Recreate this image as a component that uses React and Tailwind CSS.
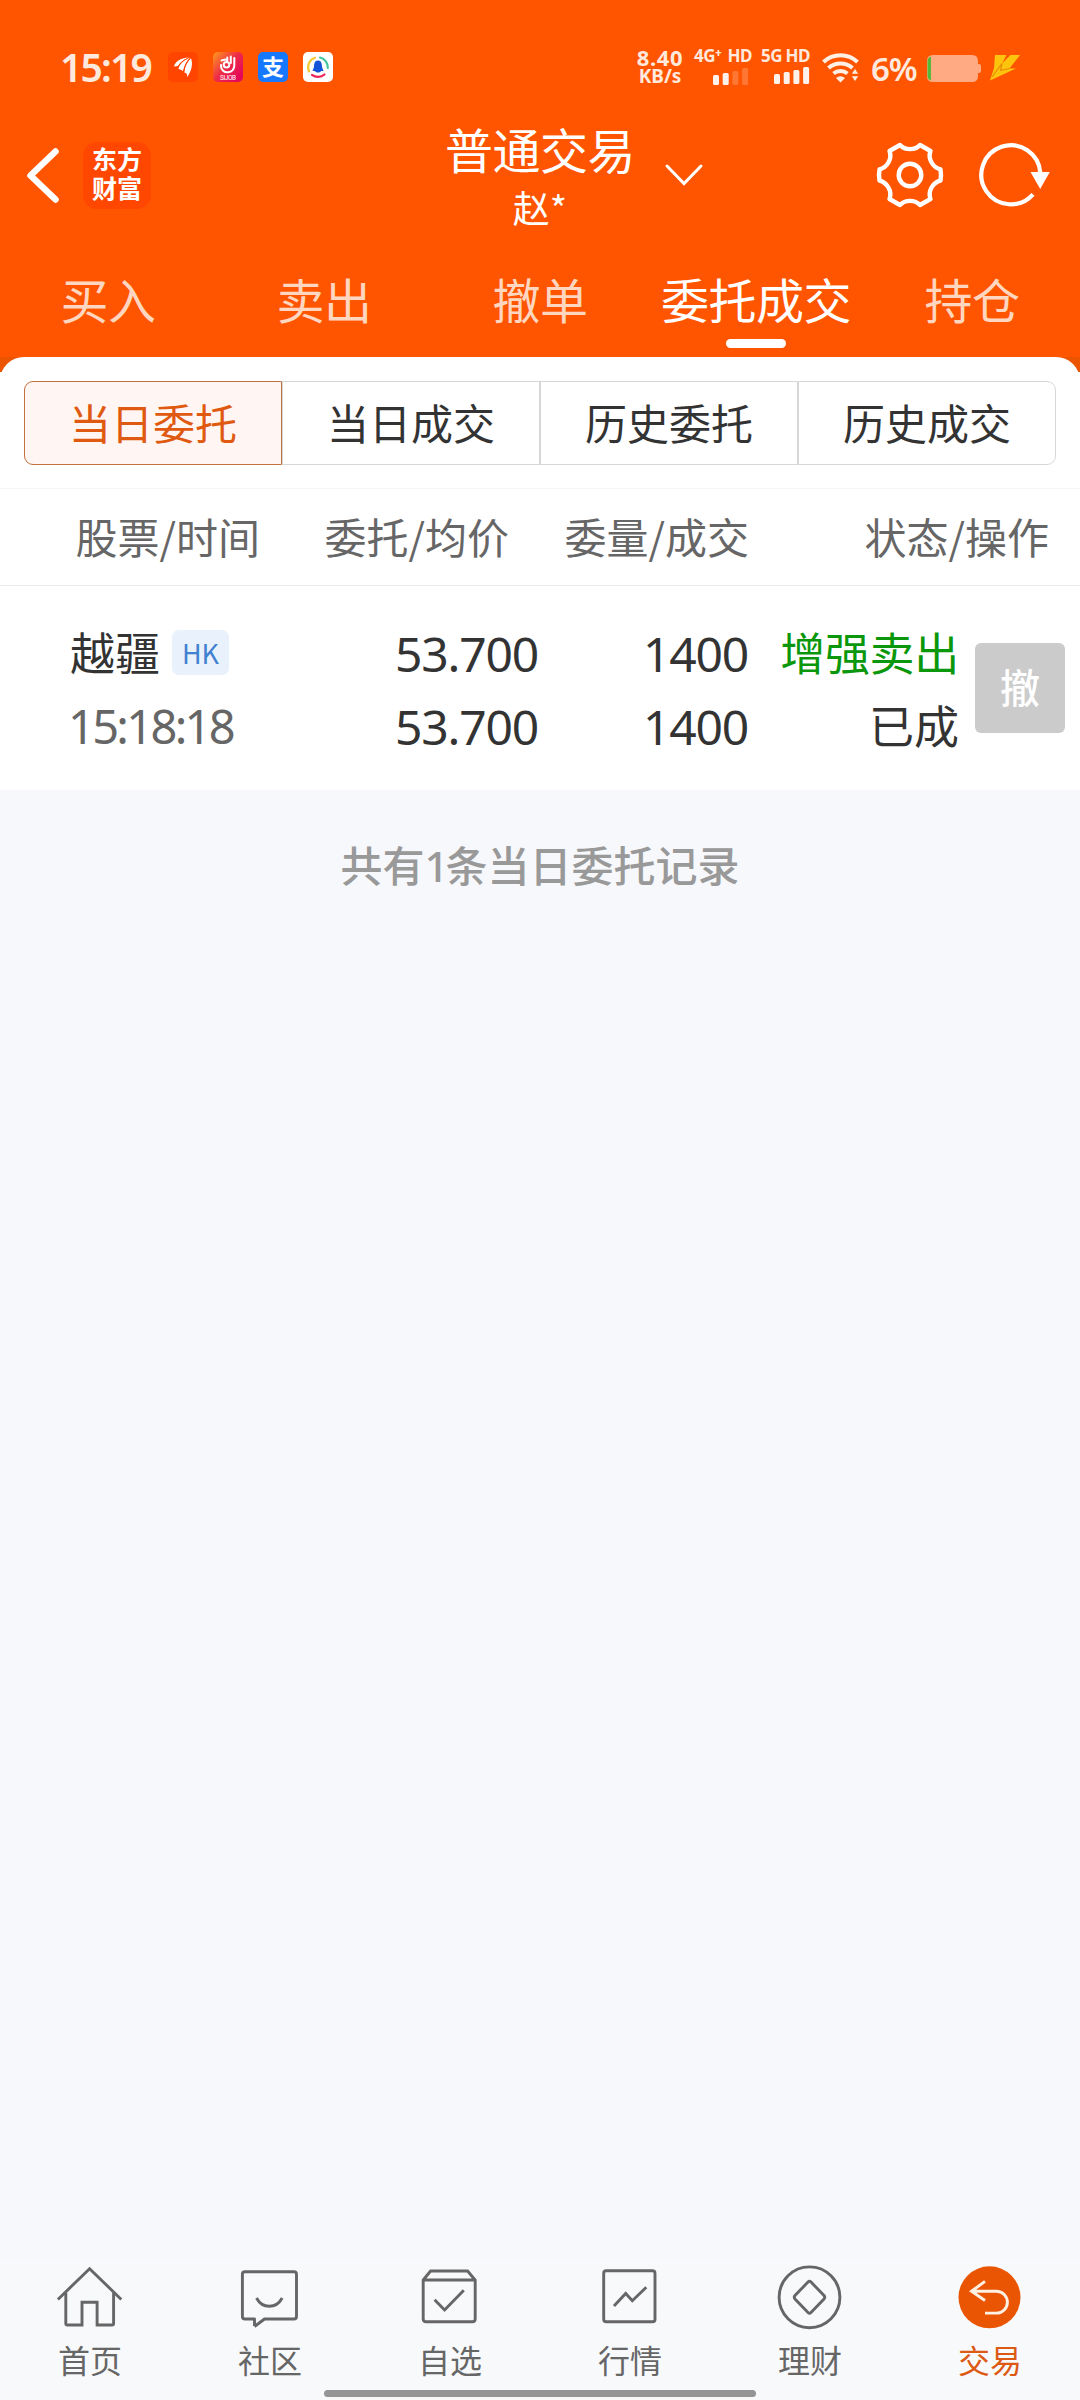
import React from 'react';

const NUM = "font-['Noto_Sans','Noto_Sans_CJK_SC',sans-serif]";

const mainTabs = ['买入', '卖出', '撤单', '委托成交', '持仓'];
const subTabs = ['当日委托', '当日成交', '历史委托', '历史成交'];

const SignalBars = ({ level }) => (
  <svg width="36" height="17" viewBox="0 0 36 17" fill="#fff">
    {[7, 5, 3, 0].map((y, i) => (
      <rect key={y} x={i * 9.7} y={y} width="6" height={17 - y} rx="1.5" opacity={i < level ? 0.92 : 0.2} />
    ))}
  </svg>
);

const NotificationIcons = () => (
  <div className="flex gap-[15px] ml-[17px]">
    <svg width="30" height="30" viewBox="0 0 30 30">
      <rect width="30" height="30" rx="5" fill="#ff4500" />
      <g fill="#fff">
        <path d="M6 14.500C7 10 12 5.800 21 5.500C16 7.500 12 10 10 14Z" />
        <path d="M10.500 17C11.500 12.500 15.500 8 22 5.800C18.500 9 16.500 13 15 19Q13 17.500 10.500 17Z" />
        <path d="M16.300 20.500C17 14 19.500 9.500 23 6.200C25 11 24 19 19 25.200C19.500 22 18.500 21 16.300 20.500Z" />
      </g>
      <path d="M9.500 16C11.500 11.500 15.500 8 20 6.200M15.600 20C16.500 14 19 9.500 21.800 7" fill="none" stroke="#ff4500" strokeWidth="0.800" />
    </svg>
    <svg width="30" height="30" viewBox="0 0 30 30">
      <defs>
        <linearGradient id="sijob" x1="0" y1="0" x2="0.9" y2="0.8">
          <stop offset="0" stopColor="#ff9a1c" />
          <stop offset="0.55" stopColor="#ee2d48" />
          <stop offset="1" stopColor="#e5075a" />
        </linearGradient>
      </defs>
      <rect width="30" height="30" rx="5" fill="url(#sijob)" />
      <g fill="none" stroke="#fff" strokeWidth="2" strokeLinecap="round">
        <path d="M8 13C7.500 17.500 11 20.500 15 20.300C19 20.200 21.500 17 21.300 13V6" />
        <path d="M17.800 11V4.500M14.300 9V5.500M8.500 8.500L12.500 7.500" />
        <circle cx="13.500" cy="12.800" r="2.800" />
      </g>
      <text x="15" y="28" textAnchor="middle" fontSize="6.500" fill="#fff" fontFamily="Roboto" textLength="16">SIJOB</text>
    </svg>
    <div className="w-[30px] h-[30px] rounded-[5px] bg-[#1677ff] text-white flex items-center justify-center text-[22px] leading-none font-bold">
      <span className="-mt-[2px]">支</span>
    </div>
    <svg width="30" height="30" viewBox="0 0 30 30">
      <rect width="30" height="30" rx="5" fill="#fff" />
      <g fill="none" strokeWidth="2.200" strokeLinecap="round">
        <path d="M6 19.500A10 10 0 0 1 12 5.800" stroke="#f3c935" />
        <path d="M17 5.500A10 10 0 0 1 24.800 16" stroke="#3fc6a0" />
        <path d="M9 22.800A10 10 0 0 0 21.500 22.500" stroke="#ec2458" />
      </g>
      <path d="M15 8.500C11.500 8.500 11 12 11 15L9.500 19H12C13 21 17 21 18 19H20.500L19 15C19 12 18.500 8.500 15 8.500Z" fill="#1354d8" />
    </svg>
  </div>
);

const StatusBar = () => (
  <div className={`h-[110px] pt-[47px] pl-[60px] flex items-start text-[#ffe9dd] ${NUM}`}>
    <div className="flex items-center h-[40px]">
      <span className="w-[91px] text-[39px] leading-[40px] font-semibold tracking-[-1.800px] whitespace-nowrap">15:19</span>
      <NotificationIcons />
    </div>

    <div className="ml-[302px] w-[50px] flex flex-col items-center font-bold leading-none">
      <span className="text-[22px] leading-[20px] tracking-[0.600px]">8.40</span>
      <span className="text-[19px] leading-[18px]">KB/s</span>
    </div>
    <div className="ml-[9px] w-[60px] flex flex-col font-bold text-[17px] leading-[17px]">
      <span className="whitespace-nowrap flex justify-between w-[58px] tracking-[-0.500px]"><span>4G<span className="font-['Roboto']">⁺</span></span><span>HD</span></span>
      <div className="ml-[19px] mt-[3px]"><SignalBars level={2} /></div>
    </div>
    <div className="ml-[7px] w-[50px] flex flex-col font-bold text-[17px] leading-[17px]">
      <span className="whitespace-nowrap flex justify-between w-[49px] tracking-[-0.500px]"><span>5G</span><span>HD</span></span>
      <div className="ml-[13px] mt-[3px]"><SignalBars level={4} /></div>
    </div>

    <svg className="ml-[11px] mt-[6px] shrink-0" width="38" height="30" viewBox="0 0 38 30">
      <g fill="none" stroke="#fff0e6" strokeWidth="4">
        <path d="M1.500 9A25 25 0 0 1 35.500 9" />
        <path d="M6.500 15A18 18 0 0 1 30.500 15" />
        <path d="M11.500 20.500A11 11 0 0 1 25.500 20.500" />
      </g>
      <path d="M14 25Q18.500 21.500 23 25L18.500 29.500Z" fill="#fff0e6" />
      <path d="M29.500 21L33 15.500L36.500 21ZM29.500 23L33 28.500L36.500 23Z" fill="#fff0e6" stroke="#ff5500" strokeWidth="0.500" />
    </svg>
    <span className="ml-[11px] w-[48px] text-[33px] leading-[40px] font-semibold tracking-[-1.200px] whitespace-nowrap pt-[2px]">6%</span>
    <svg className="ml-[8px] mt-[8px] shrink-0" width="55" height="27" viewBox="0 0 55 27">
      <path d="M6 0H45Q51 0 51 6V9H52Q54 9 54 11V16Q54 18 52 18H51V21Q51 27 45 27H6Q0 27 0 21V6Q0 0 6 0Z" fill="#ffaa82" />
      <path d="M4 1.500Q0.500 2.500 0.500 6V21Q0.500 24.500 4 25.500Z" fill="#55b93c" />
    </svg>
    <svg className="ml-[8px] mt-[8px] shrink-0" width="30" height="26" viewBox="0 0 30 26">
      <path d="M5 0H16.500L12 8.500L20.500 0H30L19.500 13.500H26L0 25.500L4 13Z" fill="#fdc40e" />
      <path d="M2 22L12 8.500L10.500 15.500L19.500 13.500" fill="none" stroke="#e98a05" strokeWidth="1.200" />
    </svg>
  </div>
);

const Header = () => (
  <div className="h-[136px] flex text-white">
    <div className="w-[360px] pl-[26px] flex items-start">
      <svg className="mt-[36px]" width="36" height="60" viewBox="0 0 36 60">
        <path d="M29.500 5.500L4.500 29.500L29.500 53.500" fill="none" stroke="#fff" strokeWidth="6.500" strokeLinecap="round" strokeLinejoin="round" />
      </svg>
      <div className="ml-[21px] mt-[32px] w-[68px] h-[67px] rounded-[14px] bg-[#ff4700] flex flex-col items-center pt-[2px] font-bold text-[25px] leading-[29px]">
        <span>东方</span>
        <span>财富</span>
      </div>
    </div>
    <div className="w-[360px] flex justify-center relative">
      <div className="flex flex-col items-center">
        <span className="text-[48px] leading-[60px] mt-[8px] tracking-[-0.500px]">普通交易</span>
        <span className="text-[37px] leading-[50px] mt-[4px]">赵*</span>
      </div>
      <svg className="absolute left-[304px] top-[52px]" width="40" height="26" viewBox="0 0 40 26">
        <path d="M3 4L20 21.500L37 4" fill="none" stroke="#fff" strokeWidth="3" strokeLinecap="round" />
      </svg>
    </div>
    <div className="w-[360px] flex pl-[154px] pt-[29px] gap-[29px]">
      <svg width="72" height="72" viewBox="0 0 72 72" fill="none" stroke="#fff" strokeWidth="4.400" strokeLinejoin="round">
        <path d="M26 6C31 11.500 41 11.500 46 6L56.500 12C53.500 20 59 28.500 66.500 30.500Q67.500 36 66.500 41.500C59 43.500 53.500 52 56.500 60L46 66C41 60.500 31 60.500 26 66L15.500 60C18.500 52 13 43.500 5.500 41.500Q4.500 36 5.500 30.500C13 28.500 18.500 20 15.500 12Z" />
        <circle cx="36" cy="36" r="11.300" />
      </svg>
      <svg width="76" height="72" viewBox="0 0 76 72">
        <path d="M58 55.300A29.500 29.500 0 1 1 65.300 34" fill="none" stroke="#fff" strokeWidth="4.200" />
        <path d="M55.500 33H74.800L65.200 50Z" fill="#fff" />
      </svg>
    </div>
  </div>
);

const MainTabs = () => (
  <div className="h-[111px] grid grid-cols-5 text-[48px] leading-none tracking-[-0.500px]">
    {mainTabs.map((t) => {
      const active = t === '委托成交';
      return (
        <div key={t} className={`flex flex-col items-center whitespace-nowrap ${active ? 'text-white' : 'text-[#ffd6bf]'}`}>
          <span className="leading-[72px] mt-[16px]">{t}</span>
          {active && <span className="w-[60px] h-[9px] rounded-full bg-white mt-[5px]" />}
        </div>
      );
    })}
  </div>
);

const SubTabs = () => (
  <div className="px-6 pt-6 pb-[23px] grid grid-cols-4">
    {subTabs.map((t, i) => (
      <div
        key={t}
        className={`h-[84px] border flex items-center justify-center text-[42px] leading-none ${
          i === 0
            ? 'border-[#c2713f] bg-[#fff5f2] text-[#df5a10] rounded-l-[9px]'
            : 'border-[#d6d8d8] text-[#333]'
        } ${i === 3 ? 'rounded-r-[9px]' : ''}`}
      >
        <span className="-mt-[2px]">{t}</span>
      </div>
    ))}
  </div>
);

const OrderTable = () => (
  <>
    <div className="h-[98px] border-y border-t-[#f5f5f5] border-b-[#ebebeb] flex items-center text-right text-[42px] leading-none text-[#666] pb-[3px]">
      <span className="w-[260px]">股票/时间</span>
      <span className="w-[249px]">委托/均价</span>
      <span className="w-[240px]">委量/成交</span>
      <span className="w-[300px]">状态/操作</span>
    </div>
    <div className="h-[204px] pt-[31px] flex text-[#333] text-[45px] leading-[73px]">
      <div className="w-[300px] pl-[70px]">
        <div className="flex items-center h-[73px]">
          <span className="-mt-[4px]">越疆</span>
          <span className="ml-[12px] -mt-[3px] w-[57px] h-[45px] rounded-[7px] bg-[#e8f1fc] text-[#4280d0] text-[27px] leading-[45px] text-center">HK</span>
        </div>
        <div className={`-ml-[2px] text-[#666] text-[47px] tracking-[-2.700px] ${NUM}`}>15:18:18</div>
      </div>
      <div className={`w-[238px] text-right text-[48px] tracking-[-1.200px] ${NUM}`}>
        <div>53.700</div>
        <div>53.700</div>
      </div>
      <div className={`w-[210px] text-right text-[48px] tracking-[-1.200px] ${NUM}`}>
        <div>1400</div>
        <div>1400</div>
      </div>
      <div className="w-[211px] text-right -mt-[2px]">
        <div className="text-[#0b970b] tracking-[-0.300px]">增强卖出</div>
        <div>已成</div>
      </div>
      <button className="ml-4 mt-[26px] w-[90px] h-[90px] rounded-[6px] bg-[#cbcbcb] text-white text-[40px] leading-none font-medium flex items-center justify-center pb-1">
        撤
      </button>
    </div>
  </>
);

const navItems = [
  {
    label: '首页',
    icon: (
      <>
        <path d="M3.900 38.500L35.600 7.700L67.300 38.500" />
        <path d="M11.800 32V62.500Q11.800 64 13.300 64H28V41.300H43.100V64H58Q59.600 64 59.600 62.500V32" />
      </>
    ),
  },
  {
    label: '社区',
    icon: (
      <>
        <path d="M20.300 58H11Q8.400 58 8.400 55.500V13.200Q8.400 10.700 11 10.700H60Q62.500 10.700 62.500 13.200V55.500Q62.500 58 60 58H30.500L20.800 65.500Z" stroke="none" />
        <path d="M20.500 65V58H11Q8.400 58 8.400 55.500V13.200Q8.400 10.700 11 10.700H60Q62.500 10.700 62.500 13.200V55.500Q62.500 58 60 58H30.500L20.500 65.500" strokeLinejoin="round" />
        <path d="M22.500 37Q27 45.300 35.300 45.300T48.200 37" />
      </>
    ),
  },
  {
    label: '自选',
    icon: (
      <>
        <path d="M9.200 19L16.600 10H53.600L61.200 19V58Q61.200 60.700 58.500 60.700H12Q9.200 60.700 9.200 58ZM9.200 19H61.200" />
        <path d="M20.600 38.700L30.600 49L49.800 29.300" />
      </>
    ),
  },
  {
    label: '行情',
    icon: (
      <>
        <rect x="9.700" y="9.700" width="51.300" height="51" rx="2.500" />
        <path d="M20 44.900L31.700 32.500L38.300 39.700L52.300 26.300" />
      </>
    ),
  },
  {
    label: '理财',
    icon: (
      <>
        <circle cx="35.500" cy="36.300" r="30.400" />
        <path d="M34 21L21 34.500Q19.500 36.300 21 38L34 51.500Q35.500 53 37 51.500L50 38Q51.500 36.300 50 34.500L37 21Q35.500 19.500 34 21Z" />
      </>
    ),
  },
  {
    label: '交易',
    active: true,
    icon: (
      <>
        <circle cx="35.500" cy="36.300" r="31" fill="#ea5504" stroke="none" />
        <path d="M31 20.300L17.500 30.300L31 39.500M17.500 30.300H42.500A10.900 10.900 0 0 1 42.500 52.100H31" stroke="#fff0e4" />
      </>
    ),
  },
];

const BottomNav = () => (
  <div className="h-[139px] bg-[#f8f9fb] flex flex-col">
    <div className="grid grid-cols-6 h-[129px]">
      {navItems.map((n) => (
        <div key={n.label} className={`flex flex-col items-center text-[32px] leading-[48px] ${n.active ? 'text-[#dc5a14]' : 'text-[#666]'}`}>
          <svg width="72" height="72" viewBox="0 0 72 72" fill="none" stroke="currentColor" strokeWidth="2.900">
            {n.icon}
          </svg>
          <span className="mt-[2px]">{n.label}</span>
        </div>
      ))}
    </div>
    <div className="mx-auto w-[432px] h-[7px] rounded-full bg-[#959595]" />
  </div>
);

const App = () => (
  <div className="w-[1080px] h-[2400px] flex flex-col overflow-hidden bg-[#f7f8fb] font-['Noto_Sans_CJK_SC',sans-serif]">
    <div className="bg-[#ff5500]">
      <StatusBar />
      <Header />
      <MainTabs />
    </div>
    <div className="bg-[linear-gradient(#eb5500_15px,#fff_15px)]">
      <div className="bg-white rounded-t-[24px]">
        <SubTabs />
        <OrderTable />
      </div>
    </div>
    <div className="flex-1 pt-[41px] text-center text-[42px] leading-[66px] text-[#999] font-medium">
      共有<span className={`${NUM} tracking-[-3px]`}>1</span>条当日委托记录
    </div>
    <BottomNav />
  </div>
);

export default App;
